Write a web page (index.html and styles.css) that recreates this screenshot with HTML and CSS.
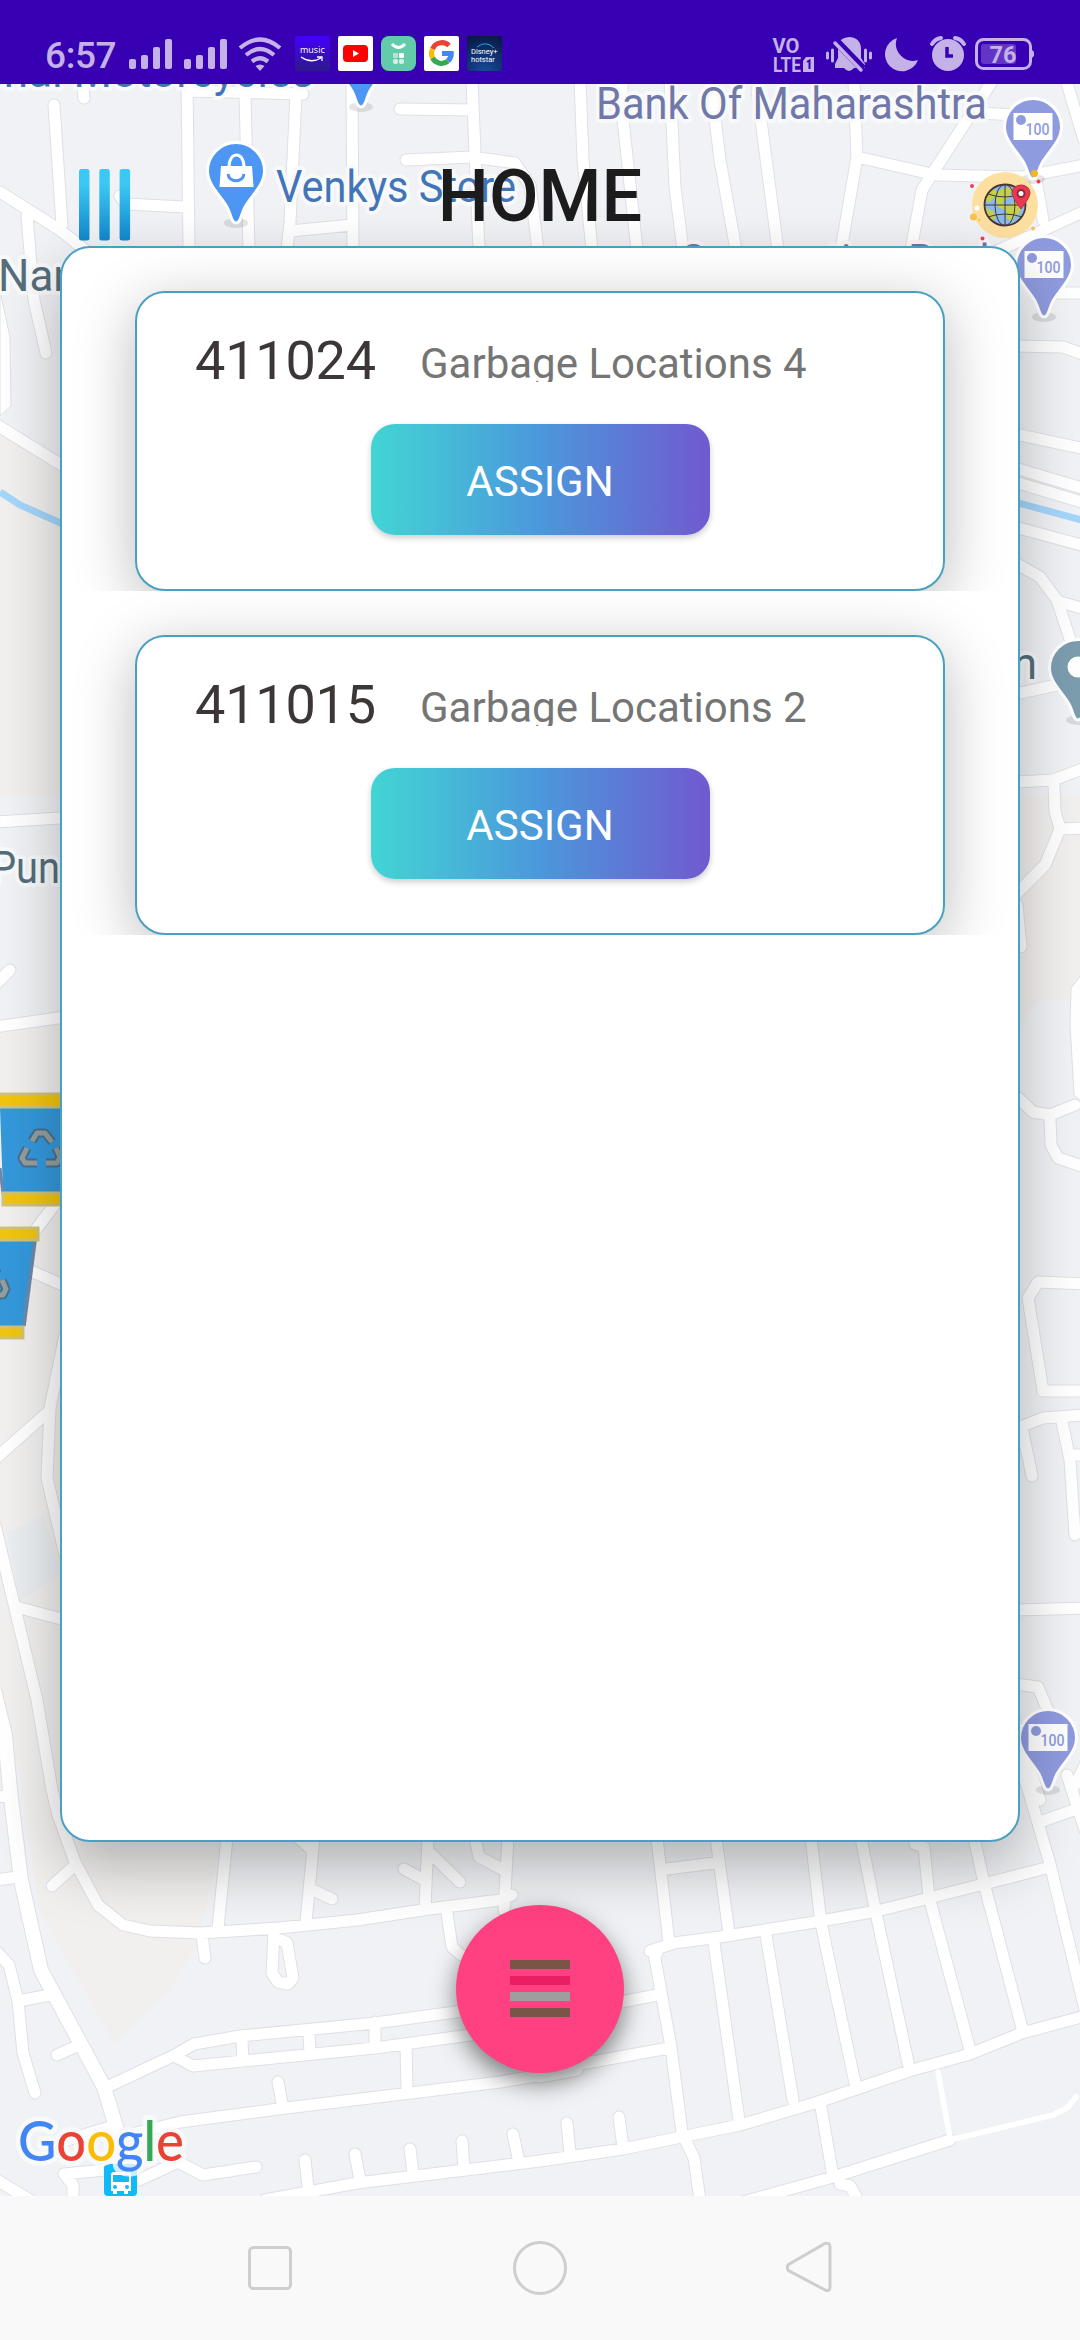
FILE: index.html
```html
<!DOCTYPE html>
<html lang="en">
<head>
<meta charset="utf-8">
<title>Home</title>
<link rel="stylesheet" href="styles.css">
</head>
<body>
<div class="screen">
  <header class="status">
    <div class="status-left">
      <span class="clock">6:57</span>
      <svg class="signals" width="98" height="35" viewBox="129 36 98 35">
        <g id="sig"><rect x="129" y="59" width="7" height="10" rx="2"/><rect x="141" y="55" width="7" height="14" rx="2"/><rect x="153" y="47" width="7" height="22" rx="2"/><rect x="165" y="39" width="7" height="30" rx="2"/></g>
        <use href="#sig" x="55"/>
      </svg>
      <svg class="wifi" width="44" height="35" viewBox="238 36 44 35">
        <g fill="none" stroke="#c3b1e8" stroke-width="4.200"><path d="M240 48Q260 31 280 48"/><path d="M246 55Q260 43 274 55"/><path d="M252 61.500Q260 55 268 61.500"/></g>
        <path d="M255.500 66Q260 63 264.500 66L260 71Z"/>
      </svg>
      <div class="apps">
        <span class="app music">music<svg width="24" height="8" viewBox="0 0 24 8"><path d="M1 1Q11 8 21 2M17 1h5v4" fill="none" stroke="#fff" stroke-width="1.300"/></svg></span>
        <span class="app youtube"><svg width="35" height="35"><rect x="5" y="9" width="25" height="17" rx="4" fill="#f00"/><path d="M15 14v7l6-3.500Z" fill="#fff"/></svg></span>
        <span class="app green"><svg width="35" height="35" fill="none"><path d="M11 8q6.500 7 13 0" stroke="#fff" stroke-width="3"/><rect x="12" y="17" width="5" height="5" rx="1" fill="#b5e5d5"/><rect x="18" y="17" width="5" height="5" rx="1" fill="#fff"/><rect x="12" y="23" width="5" height="5" rx="2" fill="#d5f0e7"/><rect x="18" y="23" width="5" height="5" rx="2" fill="#d5f0e7"/></svg></span>
        <span class="app google"><svg width="35" height="35" fill="none" stroke-width="5"><path d="M25 9.500A10.200 10.200 0 0 0 8.500 13" stroke="#ea4335"/><path d="M8.500 13a10.200 10.200 0 0 0 0 9" stroke="#fbbc05"/><path d="M8.500 22A10.200 10.200 0 0 0 24 25" stroke="#34a853"/><path d="M24 25q3.500-3.500 3.300-7.500H18" stroke="#4285f4"/></svg></span>
        <span class="app hotstar"><svg width="26" height="6"><path d="M6 5Q15-2 23 6" fill="none" stroke="#25a8d8"/></svg>Disney+<br>hotstar</span>
      </div>
    </div>
    <svg class="status-right" width="262" height="40" viewBox="772 34 262 40">
      <g class="volte"><text x="772.500" y="53" textLength="27" lengthAdjust="spacingAndGlyphs">VO</text><text x="773" y="71.500" textLength="28" lengthAdjust="spacingAndGlyphs">LTE</text></g>
      <path d="M806 57h8v15h-11v-11Z"/><path d="M807 62l2.500-1.500V69" fill="none" stroke="#3700b3" stroke-width="2"/>
      <path d="M849 37c8 0 12 5 12 12v9l4 6v4h-11q-5 6-10 0h-9v-4l3-6v-11q0-9 11-10Z"/>
      <path d="M835 40L863 69" stroke="#3700b3" stroke-width="8"/><path d="M835 43L861 70" stroke="#c3b1e8" stroke-width="3.500" stroke-linecap="round"/>
      <g stroke="#c3b1e8" stroke-width="3" stroke-linecap="round"><path d="M827.500 53v5M832.500 50v11M865.500 50v11M870.500 53v5"/></g>
      <path d="M897 38A17 17 0 1 0 918 60A17 17 0 0 1 897 38Z"/>
      <circle cx="948" cy="55" r="16"/><path d="M947 47v9h6" fill="none" stroke="#3700b3" stroke-width="3.500"/><path d="M932 44Q935 39 941 38M964 44Q961 39 955 38" fill="none" stroke="#c3b1e8" stroke-width="4" stroke-linecap="round"/>
      <rect x="976.500" y="39.500" width="54" height="29" rx="7" fill="none" stroke="#c3b1e8" stroke-width="3"/><path d="M1032 50q5 4 0 8Z"/><rect x="981" y="44" width="35" height="20" rx="3" fill="#6235c6"/>
      <text class="pct" x="989.500" y="63" textLength="27" lengthAdjust="spacingAndGlyphs">76</text>
    </svg>
  </header>

  <main class="main">
    <svg class="map" viewBox="0 84 1080 2112">
      <defs>
        <g id="pin"><ellipse cx="0" cy="0" rx="12" ry="5" fill="#000" stroke="none" opacity=".1"/><path d="M0 0C-5 0-5-9-9-16C-16-28-28.500-38-28.500-52A28.500 28.500 0 1 1 28.500-52C28.500-38 16-28 9-16C5-9 5 0 0 0Z"/></g>
        <g id="cash"><use href="#pin" class="pin-purple"/><rect x="-19.500" y="-66" width="39" height="27" fill="#fff"/><circle cx="-12" cy="-59" r="5" fill="#8f9bdf"/><text class="cash-text" x="-7.500" y="-44" textLength="24" lengthAdjust="spacingAndGlyphs">100</text></g>
        <g id="recycle" fill="none" stroke-linejoin="round"><path d="M-9-8L-4-16H4L11-7M15-1L19 8L16 14H5M-4 14H-16L-19 9L-14-1"/></g>
        <g id="roads" fill="none" stroke-linecap="round" stroke-linejoin="round">
          <path d="M187 80L189 250M82 80L84 98M54 105L62 225M0 192L60 230L90 254M27 216L34 300L46 353M190 91L303 94M245 95L249 250M296 94L290 222L287 250M290 231L352 225M352 80L353 250M120 196L126 204L185 207M400 109L472 110M472 80L479 250M406 160L472 157L515 163L530 185L538 250M580 80L583 160L592 250M622 80V110L637 250M670 80L675 187L683 250M714 80V110L720 160L736 250M757 90L778 250M854 80L857 157L841 250M857 157L936 175L1022 177L1085 165M993 80L936 168L922 190L911 250M980 113L1015 115M1066 80L1084 140M1036 180L1043 220M1085 211L995 252M1050 293H1085"/>
          <path d="M1015 346L1063 347L1085 355M1015 434L1085 449M1015 468L1085 489M1015 482L1085 503M1015 527L1085 546M1010 560L1040 577L1057 600L1072 645M1060 602L1085 609M1015 694L1057 685M1015 782L1053 780L1085 768M1054 785L1055 811L1060 829L1085 828M1060 829L1045 865L1015 895M1017 905L1021 947M1075 1105L1050 1115L1033 1112L1015 1095M1050 1120L1051 1145L1058 1158L1085 1167M1085 1284L1038 1282L1028 1298L1043 1391H1085M1015 1429L1043 1418L1085 1415M1023 1433L1032 1476M1062 1422L1070 1460L1075 1535M1072 1455H1085M1015 1610L1085 1608M1015 1684L1038 1687L1060 1740M1015 1722L1040 1800M1075 1785L1085 1765"/>
          <path d="M1015 1745L1050 1864L1085 2010M1067 1775L1085 1830M1040 1822L1085 1806M657 1953L650 1951L674 1943L720 1937L815 1922L877 1911L929 1898L1050 1867M657 1838L669 1943M716 1838L729 1933M667 1869L714 1863M811 1838L821 1923L855 2083M861 1838L876 1913L909 2067M915 1844L924 1847L929 1897L970 2050M974 1838L984 1883L1022 2028M714 1943L739 2120M766 1935L793 2100M654 1953L671 2047L682 2133L694 2158L700 2200M265 2200L357 2183L540 2161L623 2149L681 2137L740 2125L815 2103L909 2071L970 2054L1022 2033L1085 2016M821 2107L833 2177M743 2202L833 2177L950 2140M840 2184L850 2186L858 2200M567 2123L570 2153M619 2117L623 2147M600 2006L657 1995M575 2065L669 2048M540 2077L577 2070"/>
          <path d="M62 1195L28 1240M33 1272L65 1286M-5 1459L48 1412M65 1335L50 1408L47 1478L65 1555M-5 1525L13 1600L37 1700L52 1790L58 1815L75 1862L98 1905L123 1925L150 1931L200 1933L279 1928L357 1920L429 1909L500 1900L512 1895M20 1608L65 1620M-5 1880L18 1877M-5 1797L8 1796M52 1886L73 1867M227 1838L218 1928M314 1838L306 1922M295 1835L312 1850M313 1890L332 1899M428 1838L425 1907M404 1869L424 1880M430 1853L460 1882M475 1838L479 1857L504 1870M508 1838L504 1910M447 1913L452 1947L461 1955M202 1935L205 1958M274 1933L272 1973L278 1982L288 1984L293 1978L287 1943L281 1940M107 2087L175 2055L194 2044L240 2036L375 2023L470 2010M178 2058L193 2066L375 2048L470 2035M242 2040L243 2062M309 2033L310 2053M375 2022V2046M406 2045L407 2090M57 2143L110 2127M120 2137L180 2122L286 2108L411 2093L500 2082L560 2072M278 2082L282 2103M305 2160L308 2187M355 2154L360 2180M410 2149L413 2173M462 2141L464 2168M513 2134L519 2162M-5 1950L9 1965L18 2001L23 2053L35 2093M18 2001L50 1995M57 2055L77 2046M105 2170L64 2174L73 2185V2200M139 2180L178 2162L203 2175L256 2167M-5 2179L30 2200M-5 424L65 467M-5 822L60 818M10 970L-5 985M-5 1027L65 1017"/>
        </g>
        <g id="avenue" fill="none" stroke-linejoin="round"><path d="M-6 1690L5 1735L10 1790L21 1880L41 1970L104 2087L120 2140"/></g>
      </defs>
      <rect y="84" width="1080" height="2112" fill="#f0f2f5"/>
      <g fill="#f1f0ee"><path d="M0 434L62 475V796H0ZM0 1027L62 1017V1842H222L196 1947L168 1993L114 2043L39 1910L21 1780L0 1700Z"/><path d="M1020 796H1080V1000H1040L1020 1025Z"/></g>
      <path d="M7 1532L43 1516L62 1574L20 1601Z" fill="#ebeef1"/>
      <use href="#roads" stroke="#dfe0e5" stroke-width="13"/><use href="#avenue" stroke="#dfe0e5" stroke-width="16"/>
      <path d="M0 291L10 337L11 406L0 416Z" fill="#fff" stroke="#dfe0e5"/>
      <use href="#roads" stroke="#fff" stroke-width="11"/><use href="#avenue" stroke="#fff" stroke-width="14"/>
      <path d="M1085 970L1071 988L1070 1025L1074 1095L1085 1105Z" fill="#fff" stroke="#dfe0e5"/>
      <path d="M938 2072L950 2138M950 2140L1053 2115L1067 2108L1076 2097" fill="none" stroke="#fff" stroke-width="5.500" stroke-linecap="round"/>
      <path d="M0 492L20 505L65 525M1015 502L1085 521" fill="none" stroke="#a4d6fb" stroke-width="7"/>

      <g class="labels">
        <text class="blue" x="314" y="86.500" text-anchor="end">Kaushal Motorcycles</text>
        <text class="blue" x="276" y="201.500" textLength="240" lengthAdjust="spacingAndGlyphs">Venkys Store</text>
        <text class="violet" x="596" y="118.500" textLength="391" lengthAdjust="spacingAndGlyphs">Bank Of Maharashtra</text>
        <text class="violet" x="679" y="275.500" textLength="322" lengthAdjust="spacingAndGlyphs">Corporation Bank</text>
        <text class="slate" x="-2" y="291">Nan</text>
        <text class="slate" x="-9" y="883" textLength="69" lengthAdjust="spacingAndGlyphs">Pun</text>
        <text class="slate" x="1037" y="679" text-anchor="end">in</text>
      </g>
      <use href="#pin" x="361" y="107" class="pin-blue"/>
      <use href="#pin" x="236" y="223" class="pin-blue"/>
      <path d="M221 166h31l1.500 21h-34Z" fill="#fff"/><path d="M229 167c0-16 15-16 15 0" fill="none" stroke="#fff" stroke-width="3"/><path d="M228 174c1 9 15 9 16 0" fill="none" stroke="#4d96f3" stroke-width="3"/>
      <use href="#cash" x="1033" y="179"/><use href="#cash" x="1044" y="317"/><use href="#cash" x="1048" y="1790"/>
      <use href="#pin" x="1078" y="720" class="pin-slate"/><circle cx="1078" cy="667" r="10.500" fill="#fff"/>

      <path d="M0 1108H62V1192H3Z" fill="#3498db"/><path d="M0 1168L3 1194" stroke="#6f88a8" stroke-width="3"/><path d="M-2 1094H62V1107H-2ZM3 1193H62V1205H3Z" fill="#f1c40f" stroke="#cfc27c" stroke-width="3"/>
      <path d="M0 1241H36L24 1326H0Z" fill="#3498db"/><path d="M35 1241L24 1326" stroke="#6f88a8" stroke-width="3.500"/><path d="M-2 1228H38V1240H-2ZM-2 1327H23V1338H-2Z" fill="#f1c40f" stroke="#cfc27c" stroke-width="3"/>
      <g transform="translate(41 1149)"><use href="#recycle" stroke="#486f8d" stroke-width="9"/><use href="#recycle" stroke="#959e9e" stroke-width="5"/></g>
      <g transform="translate(-13 1281)"><use href="#recycle" stroke="#486f8d" stroke-width="9"/><use href="#recycle" stroke="#959e9e" stroke-width="5"/></g>

      <rect x="104" y="2164" width="33" height="32" rx="4" fill="#12b9f8"/><path d="M111 2175q0-3 3-3h14q3 0 3 3v16h-3v3h-4v-3h-7v3h-4v-3h-2Z" fill="#fff"/><path d="M113 2175h16v7h-16Z" fill="#12b9f8"/><circle cx="115" cy="2187" r="2" fill="#12b9f8"/><circle cx="127" cy="2187" r="2" fill="#12b9f8"/>
      <text class="glogo" x="18" y="2160.500" textLength="166" lengthAdjust="spacingAndGlyphs"><tspan fill="#4285f4">G</tspan><tspan fill="#ea4335">o</tspan><tspan fill="#fbbc05">o</tspan><tspan fill="#4285f4">g</tspan><tspan fill="#34a853">l</tspan><tspan fill="#ea4335">e</tspan></text>
    </svg>

    <div class="toolbar">
      <svg class="menu" width="52" height="72" viewBox="0 0 52 72"><defs><linearGradient id="mg" x1="0" y1="0" x2="0" y2="1"><stop offset=".2" stop-color="#3cc8f4"/><stop offset="1" stop-color="#1287cd"/></linearGradient></defs><g fill="url(#mg)"><rect width="10.500" height="71.500" rx="2.500"/><rect x="20.300" width="10.500" height="71.500" rx="2.500"/><rect x="40.600" width="10.500" height="71.500" rx="2.500"/></g></svg>
      <h1>HOME</h1>
      <svg class="globe" width="76" height="76" viewBox="967 166 76 76">
        <circle cx="1005" cy="204" r="33" fill="#fddfa0"/>
        <circle cx="1005" cy="204" r="20.500" fill="#8bbaea"/>
        <path d="M999 190q8-6 13-2l-3 8-7 5 5 4 8-4 5 6-8 13-5-2-1-9-8-3-2-8ZM987 193l7-6 3 5-7 9-5-1ZM986 207l8 4 1 6-3 3q-5-5-6-13ZM1016 208l6-2-4 9Z" fill="#c4d24a"/>
        <g fill="none" stroke="#493638" stroke-width="1"><circle cx="1005" cy="204" r="20.500" stroke-width="1.800"/><ellipse cx="1005" cy="204" rx="10" ry="20.500"/><path d="M1005 184v41M984 204h42M988 193q17 6 34 0M988 216q17-6 34 0"/></g>
        <path d="M1021 208q-9-12-9-16a9 8 0 0 1 18 0q0 4-9 16Z" fill="#e93a50" stroke="#b92e40"/><circle cx="1021" cy="192.500" r="3.500" fill="#fff" stroke="#91283b" stroke-width="2"/>
        <g fill="#f8c24b"><circle cx="1034.500" cy="172.500" r="3.500" fill="#f2b91d"/><circle cx="973.500" cy="216" r="3.500"/><circle cx="1033" cy="227.500" r="2"/><circle cx="979" cy="219" r="1.200"/></g>
        <g fill="#e8405a"><circle cx="972" cy="185" r="2"/><circle cx="1038.500" cy="180.500" r="2"/><circle cx="982.500" cy="237.500" r="2"/></g><circle cx="977" cy="207" r="2.500" fill="#fff"/>
      </svg>
    </div>

    <section class="panel">
      <ul class="list">
        <li class="item"><article class="card"><div class="row"><span class="code">411024</span><span class="desc">Garbage Locations 4</span></div><button class="assign">ASSIGN</button></article></li>
        <li class="item"><article class="card"><div class="row"><span class="code">411015</span><span class="desc">Garbage Locations 2</span></div><button class="assign">ASSIGN</button></article></li>
      </ul>
    </section>

    <button class="fab" aria-label="Menu"><i></i><i class="pink"></i><i class="grey"></i><i></i></button>
  </main>

  <nav class="nav">
    <svg width="60" height="60"><rect x="9.500" y="9.500" width="41" height="41" rx="4"/></svg>
    <svg width="60" height="60"><circle cx="30" cy="30" r="25.500"/></svg>
    <svg width="60" height="60"><path d="M8.500 26.500L45 5.500Q50 4 50 9V49Q50 54 45 52L8.500 32.500Q6 29.500 8.500 26.500Z"/></svg>
  </nav>
</div>
</body>
</html>
```
FILE: styles.css
```css
* { box-sizing: border-box; }
body { margin: 0; font-family: Roboto, "Noto Sans", sans-serif; }
.screen { width: 1080px; height: 2340px; display: flex; flex-direction: column; overflow: hidden; background: #f9f9f9; }
svg { display: block; flex: none; }
button { border: 0; padding: 0; font-family: inherit; }

.status { height: 84px; flex: none; background: #3700b3; color: #c3b1e8; fill: #c3b1e8; display: flex; justify-content: space-between; align-items: flex-start; padding: 34px 46px 0 45px; }
.status-left { display: flex; align-items: flex-start; padding-top: 2px; }
.clock { width: 84px; font-size: 37px; line-height: 39px; font-weight: 500; letter-spacing: -.4px; }
.wifi { margin-left: 11px; }
.apps { display: flex; gap: 8px; margin-left: 13px; }
.app { width: 35px; height: 35px; border-radius: 2px; color: #fff; overflow: hidden; background: #fff; }
.music { background: linear-gradient(#4500ff, #2d198a); font-family: "Open Sans", sans-serif; font-size: 9px; line-height: 12px; padding: 8px 0 0 5px; }
.green { background: #62cba9; border-radius: 8px; }
.hotstar { background: radial-gradient(circle at 50% 100%, #174b9c, #08153f); font-size: 7.5px; line-height: 8px; padding: 6px 0 0 4px; }
.volte text { font-size: 20px; font-weight: 700; }
.pct { font-size: 24px; font-weight: 700; }

.main { position: relative; height: 2112px; flex: none; display: flex; flex-direction: column; align-items: center; overflow: hidden; }
.map { position: absolute; inset: 0; width: 1080px; height: 2112px; }
.labels text { font-size: 44px; paint-order: stroke; stroke: rgba(250, 250, 251, .9); stroke-width: 8px; stroke-linejoin: round; }
.labels .blue { fill: #4275b8; }
.labels .violet { fill: #6f78a9; }
.labels .slate { fill: #546e7a; }
.pin-blue { fill: #4d96f3; stroke: #fff; stroke-width: 3px; }
.pin-purple { fill: #8f9bdf; stroke: #fff; stroke-width: 3px; }
.pin-slate { fill: #7b9dae; stroke: #fff; stroke-width: 3px; }
.cash-text { font-size: 17px; font-weight: 500; fill: #8f9bdf; stroke: none; }
.glogo { font-family: Lato, sans-serif; font-size: 56px; font-weight: 500; paint-order: stroke; stroke: rgba(250, 250, 250, .8); stroke-width: 10px; stroke-linejoin: round; }

.toolbar { position: relative; width: 100%; height: 162px; flex: none; display: grid; grid-template-columns: 1fr auto 1fr; align-items: center; padding: 79px 37px 0 79px; }
.toolbar h1 { margin: 0 0 16px; font-size: 72px; line-height: 60px; font-weight: 500; color: #1c1c1c; transform: translateX(-21px); }
.globe { justify-self: end; }

.panel { position: relative; z-index: 2; width: 960px; height: 1596px; flex: none; border: 2px solid #4aa0c2; border-radius: 30px; background: #fff; box-shadow: 0 24px 60px rgba(0, 0, 0, .27); }
.list { list-style: none; margin: -1px 0 0; padding: 0; }
.item { height: 344px; padding: 44px 73px 0; overflow: hidden; }
.card { height: 300px; border: 2px solid #4aa0c2; border-radius: 30px; background: #fff; box-shadow: 0 14px 60px rgba(0, 0, 0, .27); padding: 36px 58px 0; display: flex; flex-direction: column; align-items: center; }
.row { align-self: stretch; height: 64px; display: flex; }
.code { width: 225px; font-size: 54px; line-height: 64px; letter-spacing: -.2px; color: #3c3636; }
.desc { height: 43px; margin-top: 10px; overflow: hidden; white-space: nowrap; font-size: 42px; line-height: 50px; color: #757575; }
.assign { width: 339px; height: 111px; margin-top: 31px; padding-top: 4px; border-radius: 24px; background: linear-gradient(90deg, #42d5d4, #4b98db 50%, #7159d0); box-shadow: 0 3px 6px rgba(0, 0, 0, .2); color: #fff; font-size: 42px; }

.fab { position: relative; z-index: 1; width: 168px; height: 168px; flex: none; margin-top: 63px; padding-bottom: 1px; border-radius: 50%; background: #ff4081; box-shadow: 0 10px 24px rgba(0, 0, 0, .5); display: flex; flex-direction: column; align-items: center; justify-content: center; gap: 7px; }
.fab i { width: 60px; height: 9px; background: #795548; }
.fab .pink { background: #e91e63; }
.fab .grey { background: #9e9e9e; }

.nav { height: 144px; flex: none; background: #f9f9f9; display: flex; justify-content: space-between; padding: 42px 240px 0; }
.nav svg { width: 60px; fill: none; stroke: #cecece; stroke-width: 3px; }
```
